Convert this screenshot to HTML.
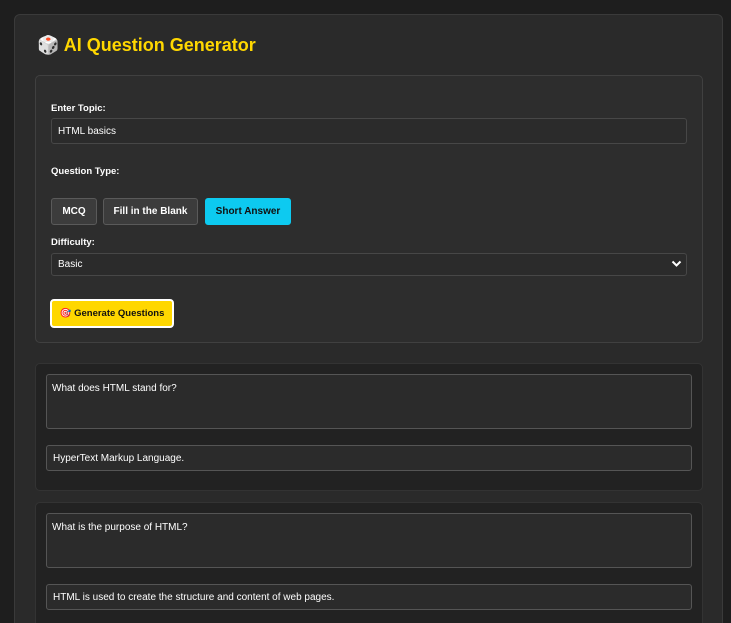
<!DOCTYPE html>
<html><head><meta charset="utf-8"><style>
*{box-sizing:border-box;margin:0;padding:0}
html,body{width:731px;height:623px;overflow:hidden}
body{background:#1e1e1e;font-family:"Liberation Sans",sans-serif;color:#fff;font-size:10px;position:relative}
.ab{position:absolute}
.cont{left:14px;top:14px;width:709px;height:620px;background:#2a2a2a;border:1px solid #3a3a3a;border-radius:6px}
h1{position:absolute;left:37px;top:35px;font-size:18px;color:#ffd700;font-weight:bold;white-space:nowrap}
.panel{left:35px;top:75px;width:668px;height:268px;background:#2d2d2d;border:1px solid #404040;border-radius:5px}
.lbl{font-weight:bold;font-size:9.5px}
.inp{background:#2b2b2b;border:1px solid #474747;border-radius:3px;padding-left:6px;display:flex;align-items:center;font-size:10px}
.btn{border:1px solid #5a5a5a;background:#3c3c3c;border-radius:3px;font-weight:bold;display:flex;align-items:center;justify-content:center;font-size:10px}
.card{left:35px;width:668px;background:#222;border:1px solid #333;border-radius:5px}
.ta{background:#2b2b2b;border:1px solid #555;border-radius:3px;padding:8px 5px;font-size:10px}
</style></head><body>
<div class="ab cont"></div>
<h1>🎲 AI Question Generator</h1>
<div class="ab panel"></div>
<div class="ab lbl" style="left:51px;top:103px">Enter Topic:</div>
<div class="ab inp" style="left:51px;top:118px;width:636px;height:26px">HTML basics</div>
<div class="ab lbl" style="left:51px;top:166px">Question Type:</div>
<div class="ab btn" style="left:51px;top:198px;width:46px;height:27px">MCQ</div>
<div class="ab btn" style="left:103px;top:198px;width:95px;height:27px">Fill in the Blank</div>
<div class="ab btn" style="left:205px;top:198px;width:86px;height:27px;background:#0dcaf0;border-color:#0dcaf0;color:#111">Short Answer</div>
<div class="ab lbl" style="left:51px;top:237px">Difficulty:</div>
<div class="ab inp" style="left:51px;top:253px;width:636px;height:23px">Basic</div>
<svg class="ab" style="left:671px;top:260px" width="11" height="8" viewBox="0 0 11 8"><path d="M1.5 1.5L5.5 5.5L9.5 1.5" stroke="#fff" stroke-width="2" fill="none"/></svg>
<div class="ab btn" style="left:50px;top:299px;width:124px;height:29px;background:#ffd700;border:2px solid #fff;color:#111;border-radius:4px;font-size:9.5px">🎯&nbsp;Generate Questions</div>
<div class="ab card" style="top:363px;height:128px"></div>
<div class="ab ta" style="left:46px;top:374px;width:646px;height:55px">What does HTML stand for?</div>
<div class="ab inp" style="left:46px;top:445px;width:646px;height:26px;border-color:#555">HyperText Markup Language.</div>
<div class="ab card" style="top:502px;height:140px"></div>
<div class="ab ta" style="left:46px;top:513px;width:646px;height:55px">What is the purpose of HTML?</div>
<div class="ab inp" style="left:46px;top:584px;width:646px;height:26px;border-color:#555">HTML is used to create the structure and content of web pages.</div>
</body></html>
